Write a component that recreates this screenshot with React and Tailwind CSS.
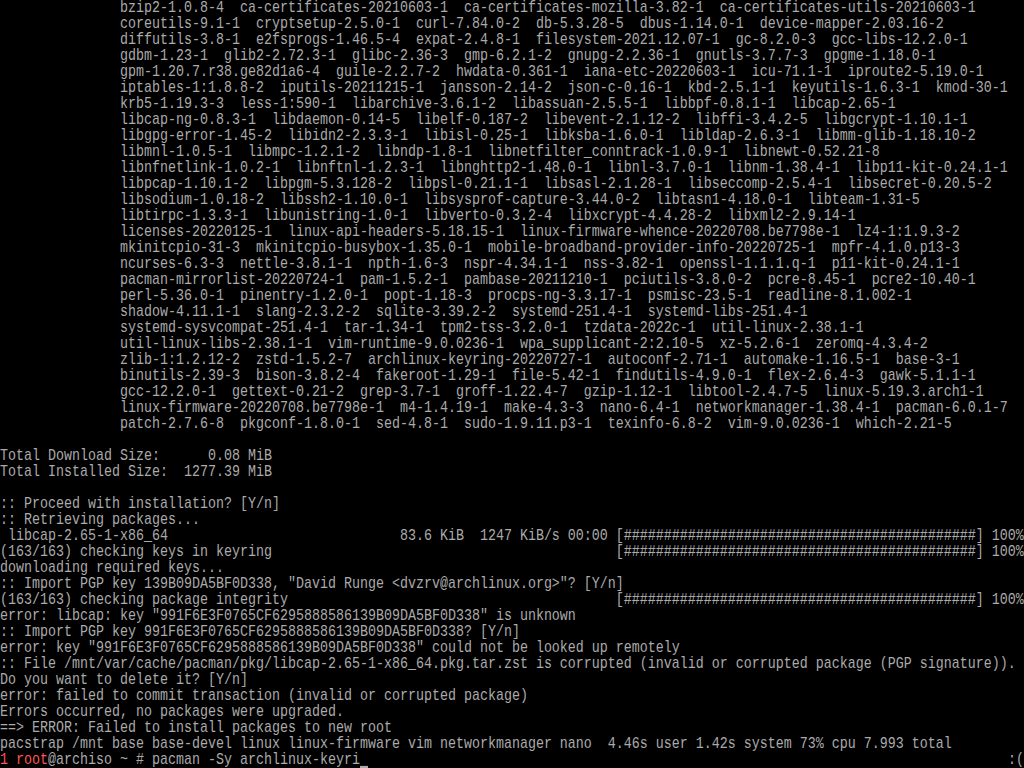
const packages = [
  "bzip2-1.0.8-4  ca-certificates-20210603-1  ca-certificates-mozilla-3.82-1  ca-certificates-utils-20210603-1",
  "coreutils-9.1-1  cryptsetup-2.5.0-1  curl-7.84.0-2  db-5.3.28-5  dbus-1.14.0-1  device-mapper-2.03.16-2",
  "diffutils-3.8-1  e2fsprogs-1.46.5-4  expat-2.4.8-1  filesystem-2021.12.07-1  gc-8.2.0-3  gcc-libs-12.2.0-1",
  "gdbm-1.23-1  glib2-2.72.3-1  glibc-2.36-3  gmp-6.2.1-2  gnupg-2.2.36-1  gnutls-3.7.7-3  gpgme-1.18.0-1",
  "gpm-1.20.7.r38.ge82d1a6-4  guile-2.2.7-2  hwdata-0.361-1  iana-etc-20220603-1  icu-71.1-1  iproute2-5.19.0-1",
  "iptables-1:1.8.8-2  iputils-20211215-1  jansson-2.14-2  json-c-0.16-1  kbd-2.5.1-1  keyutils-1.6.3-1  kmod-30-1",
  "krb5-1.19.3-3  less-1:590-1  libarchive-3.6.1-2  libassuan-2.5.5-1  libbpf-0.8.1-1  libcap-2.65-1",
  "libcap-ng-0.8.3-1  libdaemon-0.14-5  libelf-0.187-2  libevent-2.1.12-2  libffi-3.4.2-5  libgcrypt-1.10.1-1",
  "libgpg-error-1.45-2  libidn2-2.3.3-1  libisl-0.25-1  libksba-1.6.0-1  libldap-2.6.3-1  libmm-glib-1.18.10-2",
  "libmnl-1.0.5-1  libmpc-1.2.1-2  libndp-1.8-1  libnetfilter_conntrack-1.0.9-1  libnewt-0.52.21-8",
  "libnfnetlink-1.0.2-1  libnftnl-1.2.3-1  libnghttp2-1.48.0-1  libnl-3.7.0-1  libnm-1.38.4-1  libp11-kit-0.24.1-1",
  "libpcap-1.10.1-2  libpgm-5.3.128-2  libpsl-0.21.1-1  libsasl-2.1.28-1  libseccomp-2.5.4-1  libsecret-0.20.5-2",
  "libsodium-1.0.18-2  libssh2-1.10.0-1  libsysprof-capture-3.44.0-2  libtasn1-4.18.0-1  libteam-1.31-5",
  "libtirpc-1.3.3-1  libunistring-1.0-1  libverto-0.3.2-4  libxcrypt-4.4.28-2  libxml2-2.9.14-1",
  "licenses-20220125-1  linux-api-headers-5.18.15-1  linux-firmware-whence-20220708.be7798e-1  lz4-1:1.9.3-2",
  "mkinitcpio-31-3  mkinitcpio-busybox-1.35.0-1  mobile-broadband-provider-info-20220725-1  mpfr-4.1.0.p13-3",
  "ncurses-6.3-3  nettle-3.8.1-1  npth-1.6-3  nspr-4.34.1-1  nss-3.82-1  openssl-1.1.1.q-1  p11-kit-0.24.1-1",
  "pacman-mirrorlist-20220724-1  pam-1.5.2-1  pambase-20211210-1  pciutils-3.8.0-2  pcre-8.45-1  pcre2-10.40-1",
  "perl-5.36.0-1  pinentry-1.2.0-1  popt-1.18-3  procps-ng-3.3.17-1  psmisc-23.5-1  readline-8.1.002-1",
  "shadow-4.11.1-1  slang-2.3.2-2  sqlite-3.39.2-2  systemd-251.4-1  systemd-libs-251.4-1",
  "systemd-sysvcompat-251.4-1  tar-1.34-1  tpm2-tss-3.2.0-1  tzdata-2022c-1  util-linux-2.38.1-1",
  "util-linux-libs-2.38.1-1  vim-runtime-9.0.0236-1  wpa_supplicant-2:2.10-5  xz-5.2.6-1  zeromq-4.3.4-2",
  "zlib-1:1.2.12-2  zstd-1.5.2-7  archlinux-keyring-20220727-1  autoconf-2.71-1  automake-1.16.5-1  base-3-1",
  "binutils-2.39-3  bison-3.8.2-4  fakeroot-1.29-1  file-5.42-1  findutils-4.9.0-1  flex-2.6.4-3  gawk-5.1.1-1",
  "gcc-12.2.0-1  gettext-0.21-2  grep-3.7-1  groff-1.22.4-7  gzip-1.12-1  libtool-2.4.7-5  linux-5.19.3.arch1-1",
  "linux-firmware-20220708.be7798e-1  m4-1.4.19-1  make-4.3-3  nano-6.4-1  networkmanager-1.38.4-1  pacman-6.0.1-7",
  "patch-2.7.6-8  pkgconf-1.8.0-1  sed-4.8-1  sudo-1.9.11.p3-1  texinfo-6.8-2  vim-9.0.0236-1  which-2.21-5",
];

const bar = "[" + "#".repeat(44) + "] 100%";
const pad = (s, n) => s + " ".repeat(Math.max(0, n - s.length));

const output = [
  "",
  "Total Download Size:      0.08 MiB",
  "Total Installed Size:  1277.39 MiB",
  "",
  ":: Proceed with installation? [Y/n]",
  ":: Retrieving packages...",
  pad(" libcap-2.65-1-x86_64", 50) + "83.6 KiB  1247 KiB/s 00:00 " + bar,
  pad("(163/163) checking keys in keyring", 77) + bar,
  "downloading required keys...",
  ':: Import PGP key 139B09DA5BF0D338, "David Runge <dvzrv@archlinux.org>"? [Y/n]',
  pad("(163/163) checking package integrity", 77) + bar,
  'error: libcap: key "991F6E3F0765CF6295888586139B09DA5BF0D338" is unknown',
  ":: Import PGP key 991F6E3F0765CF6295888586139B09DA5BF0D338? [Y/n]",
  'error: key "991F6E3F0765CF6295888586139B09DA5BF0D338" could not be looked up remotely',
  ":: File /mnt/var/cache/pacman/pkg/libcap-2.65-1-x86_64.pkg.tar.zst is corrupted (invalid or corrupted package (PGP signature)).",
  "Do you want to delete it? [Y/n]",
  "error: failed to commit transaction (invalid or corrupted package)",
  "Errors occurred, no packages were upgraded.",
  "==> ERROR: Failed to install packages to new root",
  "pacstrap /mnt base base-devel linux linux-firmware vim networkmanager nano  4.46s user 1.42s system 73% cpu 7.993 total",
];

function Line({ children }) {
  return (
    <div className="h-4 whitespace-pre origin-center scale-y-[1.18]">
      {children}
    </div>
  );
}

export default function App() {
  return (
    <div
      className="w-[1024px] h-[768px] overflow-hidden bg-black text-[#aaaaaa] text-[13.333px] leading-4"
      style={{ fontFamily: '"Liberation Mono", "DejaVu Sans Mono", monospace' }}
    >
      {packages.map((p, i) => (
        <Line key={"p" + i}>{"               " + p}</Line>
      ))}
      {output.map((l, i) => (
        <Line key={"o" + i}>{l}</Line>
      ))}
      <div className="h-4 flex whitespace-pre origin-center scale-y-[1.18]">
        <span className="text-[#ff5555]">1 root</span>
        <span>@archiso ~ # pacman -Sy archlinux-keyri</span>
        <span className="flex flex-col justify-end h-4 w-2">
          <span className="h-[2px] w-2 bg-[#aaaaaa] mb-[1px]" />
        </span>
        <span className="ml-auto">:(</span>
      </div>
    </div>
  );
}
